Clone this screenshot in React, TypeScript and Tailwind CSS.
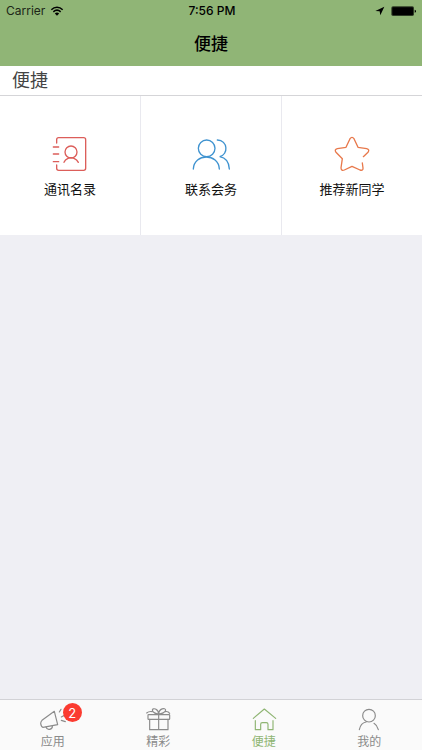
import type { ReactNode } from "react";

const fontStack = "font-['Inter','Noto_Sans_CJK_SC',sans-serif]";

function StatusBar() {
  return (
    <div className="grid h-[22px] grid-cols-3 items-center pr-1 pl-1.5 text-xs text-black">
      <div className="flex items-center gap-1">
        <span className="text-[#1c2617]">Carrier</span>
        <svg className="h-3 w-4" viewBox="0 0 48 36" aria-hidden="true" fill="none" stroke="#000" strokeWidth="4.5">
          <path d="M7 14C17 4 31 4 41 14" />
          <path d="M13 20.500C20 14 28 14 35 20.500" />
          <path d="M17.500 25.500C21.500 21 26.500 21 30.500 25.500L24 32Z" fill="#000" stroke="none" />
        </svg>
      </div>
      <span className="text-center font-medium">7:56 PM</span>
      <div className="flex items-center justify-end gap-1">
        <svg className="h-3 w-3" viewBox="0 0 36 36" aria-hidden="true">
          <path d="M31 5L4 18L17 19L19 31Z" fill="#000" />
        </svg>
        <svg className="h-3 w-7" viewBox="0 0 84 36" aria-hidden="true">
          <rect x="4" y="4" width="68" height="29" rx="5" fill="#2d3a25" />
          <rect x="7" y="7" width="62" height="23" rx="2" fill="#000" />
          <path d="M74 14Q78 15 78 18.500T74 23Z" fill="#000" />
        </svg>
      </div>
    </div>
  );
}

function Shortcut({ label, children }: { label: string; children: ReactNode }) {
  return (
    <button className="flex h-[139px] flex-col items-center bg-white pt-[39px] text-[13px] leading-5 text-[#111111]">
      {children}
      <span className="mt-1">{label}</span>
    </button>
  );
}

function Tab({ label, active, badge, children }: { label: string; active?: boolean; badge?: number; children: ReactNode }) {
  return (
    <a
      href="#"
      aria-current={active ? "page" : undefined}
      className={`flex flex-1 flex-col items-center pt-[7px] text-xs leading-4 ${active ? "text-[#8fb573]" : "text-[#8a8a8a]"}`}
    >
      <span className="relative">
        {children}
        {badge !== undefined && (
          <span className="absolute -top-1 left-6 flex h-[19px] w-[19px] items-center justify-center rounded-full bg-[#fb3b30] text-[13px] text-white">
            {badge}
          </span>
        )}
      </span>
      <span className="mt-[3px]">{label}</span>
    </a>
  );
}

const tabIcon = "h-6 w-7";
const gridIcon = "h-10 w-10";

export default function App() {
  return (
    <div className={`flex min-h-screen flex-col bg-[#efeff4] ${fontStack}`}>
      <header className="h-[66px] bg-[#90b576]">
        <StatusBar />
        <h1 className="pt-2 text-center text-[17px] leading-7 font-medium text-black">便捷</h1>
      </header>

      <main className="flex-1">
        <h2 className="h-[30px] border-b border-[#d5d5d8] bg-white px-3 text-lg leading-[30px] text-[#444444]">便捷</h2>
        <div className="grid grid-cols-3 gap-px bg-[#e9e9ef]">
          <Shortcut label="通讯名录">
            <svg className={gridIcon} viewBox="60 30 120 120" aria-hidden="true" fill="none" stroke="#dc5e5a" strokeWidth="4" strokeLinecap="round">
              <path d="M80 54V44Q80 38 86 38H161Q167 38 167 44V130Q167 136 161 136H86Q80 136 80 130V120" />
              <path d="M70 66H86M70 87H86M70 110H86" />
              <circle cx="123" cy="81" r="18" />
              <path d="M102 112Q105 104 114 100Q123 96 132 100Q141 104 145 112" />
            </svg>
          </Shortcut>
          <Shortcut label="联系会务">
            <svg className={gridIcon} viewBox="60 30 120 120" aria-hidden="true" fill="none" stroke="#3f93d0" strokeWidth="4" strokeLinecap="round">
              <circle cx="107" cy="70" r="25" />
              <path d="M67 132C69 84 143 84 145 132" />
              <path d="M139 45C171 46 173 89 146 95C163 98 174 111 175 132" />
            </svg>
          </Shortcut>
          <Shortcut label="推荐新同学">
            <svg className={gridIcon} viewBox="66 30 120 120" aria-hidden="true" fill="none" stroke="#e8794c" strokeWidth="4" strokeLinecap="round" strokeLinejoin="round">
              <path d="M160 95L174 82Q180 74 170 71L144 67L132 41Q126 33 120 41L108 67L82 71Q72 74 78 82L97 101L93 129Q94 139 103 135L126 124L150 135Q160 138 159 129L157 114" />
            </svg>
          </Shortcut>
        </div>
      </main>

      <nav className="flex h-[51px] border-t border-[#d2d2d6] bg-[#fafafa]">
        <Tab label="应用" badge={2}>
          <svg className={tabIcon} viewBox="41 36 84 72" aria-hidden="true" fill="none" stroke="#8b8b8b" strokeWidth="3.5" strokeLinecap="round" strokeLinejoin="round">
            <path d="M87 49L97 89L53 97Q48 96 46 86Q46 80 50 76Z" />
            <path d="M62 96Q65 105 73 103Q82 101 81 93" />
            <path d="M102 51L107 43M108 66L119 60M108 76L120 80" />
          </svg>
        </Tab>
        <Tab label="精彩">
          <svg className={tabIcon} viewBox="58 36 84 72" aria-hidden="true" fill="none" stroke="#8b8b8b" strokeWidth="3.500" strokeLinejoin="round" strokeLinecap="round">
            <rect x="70" y="59" width="65" height="14" rx="2" />
            <path d="M75 73V104H130V73M102 59V104" />
            <path d="M102 57C94 57 83 52 83 45C84 38 101 40 102 57C103 40 122 37 123 45C123 52 110 57 102 57" />
            <path d="M83 50Q73 48 66 54M122 50Q130 48 135 55" />
          </svg>
        </Tab>
        <Tab label="便捷" active>
          <svg className={tabIcon} viewBox="59 36 84 72" aria-hidden="true" fill="none" stroke="#8fb573" strokeWidth="3.5" strokeLinejoin="round" strokeLinecap="round">
            <path d="M69 70L102 42L136 70" />
            <path d="M75 77V104H91V88Q91 83 96 83H108Q113 83 113 88V104H128V77" />
          </svg>
        </Tab>
        <Tab label="我的">
          <svg className={tabIcon} viewBox="61 36 84 72" aria-hidden="true" fill="none" stroke="#8b8b8b" strokeWidth="3.5" strokeLinecap="round">
            <circle cx="103" cy="62" r="19" />
            <path d="M74 104Q78 84 94 81M118 85Q128 91 131 104" />
          </svg>
        </Tab>
      </nav>
    </div>
  );
}
